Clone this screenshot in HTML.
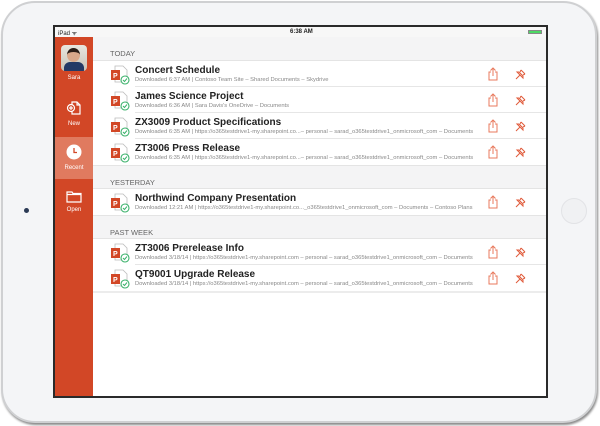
<!DOCTYPE html>
<html><head><meta charset="utf-8"><style>
*{margin:0;padding:0;box-sizing:border-box}
body{width:600px;height:426px;background:#fff;position:relative;overflow:hidden;font-family:"Liberation Sans",Arial,sans-serif}
.dev{position:absolute;left:1px;top:1px;width:596px;height:422px;border-radius:34px;background:#f4f5f7;border:2px solid #cfd0d2;box-shadow:1px 2px 2px #8a8a8a}
.scr{position:absolute;left:53px;top:25px;width:495px;height:373px;border:2px solid #2a2a2a;background:#fff;overflow:hidden}
.sb{position:absolute;left:0;top:0;width:100%;height:10px;background:#f7f7f7;font-size:6px;color:#222;font-weight:bold}
.side{position:absolute;left:0;top:10px;width:38px;bottom:0;background:#d24726}
.main{position:absolute;left:38px;top:10px;right:0;bottom:0;background:#fff}
.hd{position:absolute;left:0;right:0;background:#f4f4f5;font-size:7.5px;color:#666;padding-left:17px;border-bottom:1px solid #e4e4e4}
.row{position:absolute;left:0;right:0;height:26px;background:#fff}
.row .ln{position:absolute;left:42px;right:0;bottom:0;height:1px;background:#e6e6e6}
.t{position:absolute;left:42px;top:4px;font-size:10px;font-weight:bold;color:#222;white-space:nowrap}
.s{position:absolute;left:42px;top:16px;font-size:5.8px;color:#888;white-space:nowrap}
.ic{position:absolute;left:16px;top:4px}
.sh{position:absolute;left:394px;top:6px}
.pn{position:absolute;left:422px;top:7px}
.lab{position:absolute;width:38px;text-align:center;color:#fff;font-size:6px}
</style></head><body>
<div class="dev"></div>
<div style="position:absolute;left:24px;top:208px;width:5px;height:5px;border-radius:50%;background:#2b3a55"></div>
<div style="position:absolute;left:561px;top:198px;width:26px;height:26px;border-radius:50%;background:#f0f1f3;border:1px solid #e2e3e6"></div>
<div class="scr">
<div class="sb"><span style="position:absolute;left:3px;top:2px;font-weight:normal">iPad ᯤ</span><span style="position:absolute;left:235px;top:2px">6:38 AM</span><span style="position:absolute;right:4px;top:3px;width:14px;height:4px;background:#4cd964;border:1px solid #888"></span></div>
<div class="side">
<div style="position:absolute;left:6px;top:8px;width:26px;height:26px;border-radius:4px;background:linear-gradient(#e8e6df,#c9c4b8);overflow:hidden"><div style="position:absolute;left:6px;top:3px;width:13px;height:14px;border-radius:50%;background:#d9a88a;border-top:4px solid #2a1d17"></div><div style="position:absolute;left:3px;top:17px;width:20px;height:10px;border-radius:6px 6px 0 0;background:#243a66"></div></div>
<div class="lab" style="top:38px">Sara</div>
<svg style="position:absolute;left:11px;top:63px" width="16" height="16" viewBox="0 0 16 16" fill="none" stroke="#fff" stroke-width="1.2"><path d="M6 2h5l3 3v9H6z M11 2v3h3"/><circle cx="5" cy="8" r="3.5" fill="#d24726"/><path d="M5 6v4M3 8h4"/></svg>
<div class="lab" style="top:84px">New</div>
<div style="position:absolute;left:0;top:100px;width:38px;height:42px;background:#e07a5f"></div>
<svg style="position:absolute;left:11px;top:107px" width="16" height="16" viewBox="0 0 16 16"><circle cx="8" cy="8" r="7.5" fill="#fff"/><path d="M8 4v4.5h3" stroke="#d24726" stroke-width="1.3" fill="none"/></svg>
<div class="lab" style="top:128px">Recent</div>
<svg style="position:absolute;left:11px;top:152px" width="16" height="14" viewBox="0 0 16 14" fill="none" stroke="#fff" stroke-width="1.2"><path d="M1 3h5l1 1.5h8V13H1z M1 5.5h14"/></svg>
<div class="lab" style="top:170px">Open</div>
</div>
<div class="main">
<div class="hd" style="top:0;height:24px;padding-top:12px">TODAY</div>
<div id="r"></div>
</div>
</div>
<script>
var ic='<svg class="ic" width="22" height="20" viewBox="0 0 22 20"><path d="M6 1h8l4 4v12H6z" fill="#fff" stroke="#bbb" stroke-width=".8"/><rect x="2" y="5" width="9" height="10" fill="#d24726"/><text x="4" y="13" font-size="7" font-weight="bold" fill="#fff" font-family="Liberation Sans">P</text><circle cx="16" cy="15" r="4" fill="#fff" stroke="#3bb26b" stroke-width="1.1"/><path d="M14 15l1.5 1.5 2.5-3" stroke="#3bb26b" fill="none" stroke-width="1"/></svg>';
var sh='<svg class="sh" width="12" height="14" viewBox="0 0 12 14" fill="none" stroke="#e8795c" stroke-width="1"><path d="M4 5H2v8h8V5H8M6 9V1M3.5 3.5L6 1l2.5 2.5"/></svg>';
var pn='<svg class="pn" width="12" height="12" viewBox="0 0 12 12" fill="none" stroke="#e05a3a" stroke-width="1"><path d="M1 11l4-4M4 4l4 4M6 2l4 4M5 4l1-2M8 7l2-1M4 4h-2l6 6v-2"/></svg>';
var rows=[[24,"Concert Schedule","Downloaded 6:37 AM | Contoso Team Site – Shared Documents – Skydrive",1],
[50,"James Science Project","Downloaded 6:36 AM | Sara Davis's OneDrive – Documents",1],
[76,"ZX3009 Product Specifications","Downloaded 6:35 AM | https://o365testdrive1-my.sharepoint.co...– personal – sarad_o365testdrive1_onmicrosoft_com – Documents",1],
[102,"ZT3006 Press Release","Downloaded 6:35 AM | https://o365testdrive1-my.sharepoint.co...– personal – sarad_o365testdrive1_onmicrosoft_com – Documents",0],
[152,"Northwind Company Presentation","Downloaded 12:21 AM | https://o365testdrive1-my.sharepoint.co..._o365testdrive1_onmicrosoft_com – Documents – Contoso Plans",0],
[202,"ZT3006 Prerelease Info","Downloaded 3/18/14 | https://o365testdrive1-my.sharepoint.com – personal – sarad_o365testdrive1_onmicrosoft_com – Documents",1],
[228,"QT9001 Upgrade Release","Downloaded 3/18/14 | https://o365testdrive1-my.sharepoint.com – personal – sarad_o365testdrive1_onmicrosoft_com – Documents",0]];
var h='<div class="hd" style="top:128px;height:24px;padding-top:12px;border-top:1px solid #e4e4e4">YESTERDAY</div><div class="hd" style="top:178px;height:24px;padding-top:12px;border-top:1px solid #e4e4e4">PAST WEEK</div>';
rows.forEach(function(r){h+='<div class="row" style="top:'+r[0]+'px">'+ic+'<div class="t">'+r[1]+'</div><div class="s">'+r[2]+'</div>'+sh+pn+(r[3]?'<div class="ln"></div>':'')+'</div>';});
h+='<div style="position:absolute;left:0;right:0;top:254px;height:2px;background:#ececec"></div>';
document.getElementById('r').innerHTML=h;
</script>
</body></html>
